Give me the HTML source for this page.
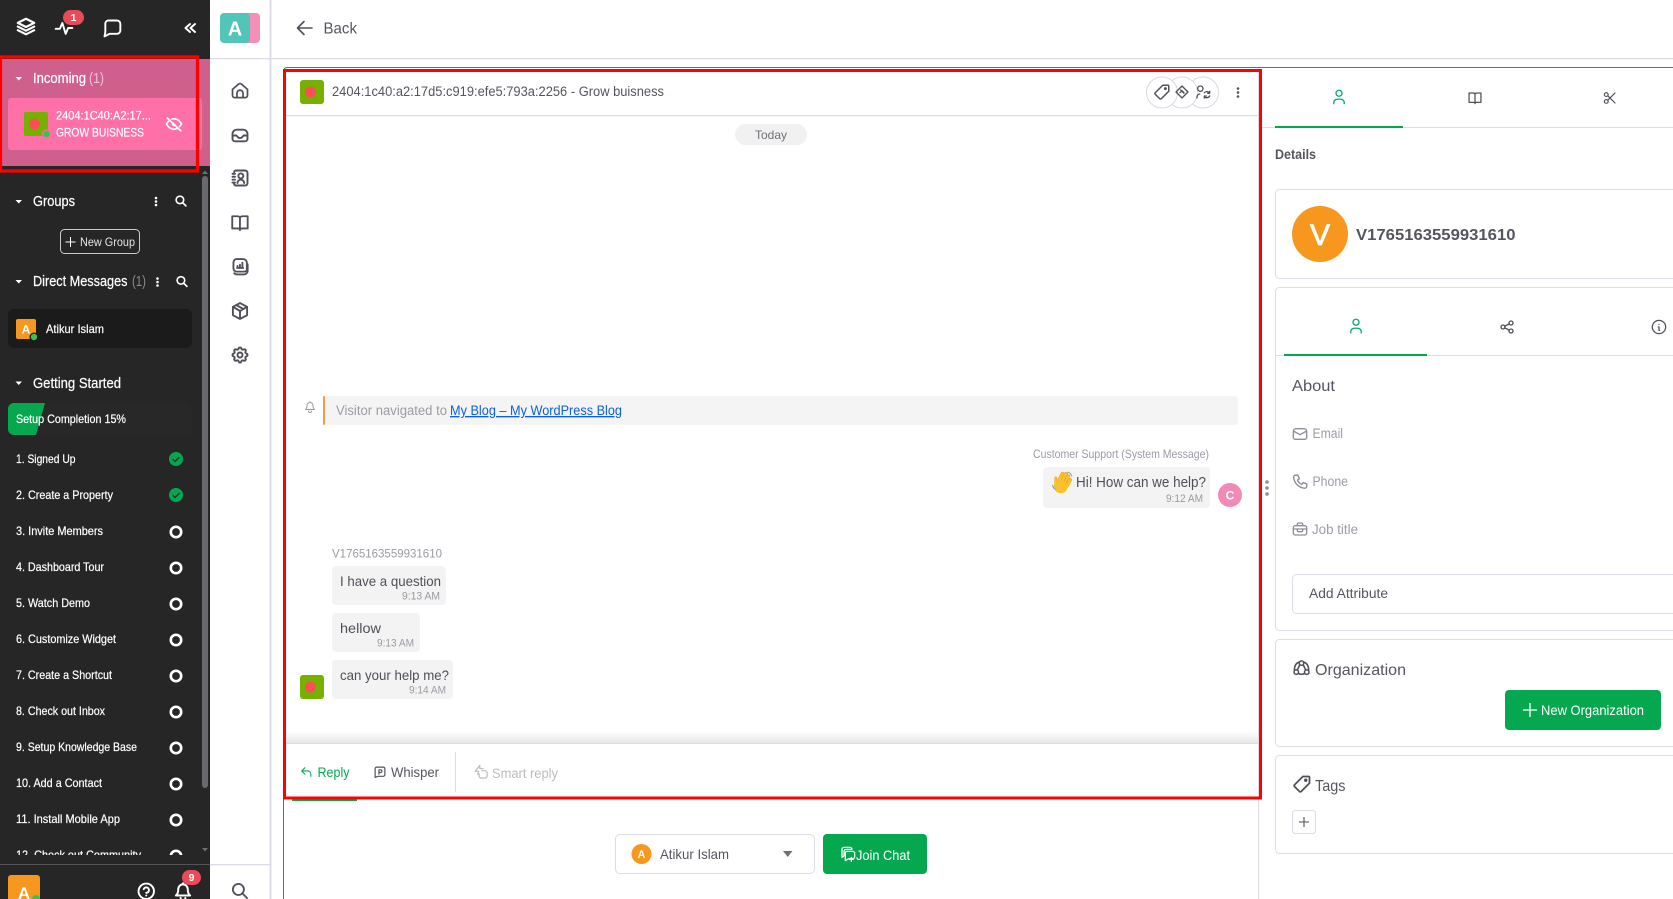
<!DOCTYPE html>
<html><head><meta charset="utf-8"><title>Chat</title>
<style>
html,body{margin:0;padding:0;background:#fff;width:1673px;height:899px;overflow:hidden}
svg{display:block;font-family:"Liberation Sans",sans-serif}
.i{fill:none;stroke-linecap:round;stroke-linejoin:round}
.w{fill:#fff}
</style></head><body>
<svg width="1673" height="899" viewBox="0 0 1673 899" xmlns="http://www.w3.org/2000/svg">
<defs>
<clipPath id="side"><rect x="0" y="0" width="210" height="855"/></clipPath>
<linearGradient id="sh" x1="0" y1="0" x2="0" y2="1"><stop offset="0" stop-color="#fff"/><stop offset="1" stop-color="#e6e6e8"/></linearGradient>
<symbol id="home" viewBox="0 0 24 24"><path d="M2 10.500L10 3.500a3 3 0 0 1 4 0l8 7v8a3 3 0 0 1-3 3H5a3 3 0 0 1-3-3z M8 21.500v-6a4 4 0 0 1 8 0v6"/></symbol>
<symbol id="inbox" viewBox="0 0 24 24"><path d="M8 5h8a5 5 0 0 1 5 5v6a3 3 0 0 1-3 3H6a3 3 0 0 1-3-3v-6a5 5 0 0 1 5-5z M3 12h4.500c1 0 1.500 3 4.500 3s3.500-3 4.500-3H21"/></symbol>
<symbol id="contact" viewBox="0 0 24 24"><path d="M5 5a2 2 0 0 1 2-2h11a3 3 0 0 1 3 3v12a3 3 0 0 1-3 3H7a2 2 0 0 1-2-2 M3 7h3 M3 10.500h3 M3 14h3 M3 17.500h3 M9 18a4 4 0 0 1 8 0"/><circle cx="13" cy="9.500" r="3"/></symbol>
<symbol id="book" viewBox="0 0 24 24"><path d="M2.500 4h6c2 0 3.500 1 3.500 2.500C12 5 13.500 4 15.500 4h6v15h-7c-1.500 0-2.500.5-2.500 2 0-1.500-1-2-2.500-2h-7z M12 6.500V21"/></symbol>
<symbol id="report" viewBox="0 0 24 24"><path d="M8 2.500h8a4.500 4.500 0 0 1 4.500 4.500v8a3 3 0 0 1-3 3h-9.500a4 4 0 0 1-4-4V6.500a4 4 0 0 1 4-4z M21.500 9v8a4.500 4.500 0 0 1-4.500 4.500H8a4 4 0 0 1-3-1.500 M8.500 13.500h7.500 M9 13v-2 M12 13V9.500 M15 13V7"/></symbol>
<symbol id="box" viewBox="0 0 24 24"><path d="M12 2.500l8.500 4.500v10L12 21.500 3.500 17V7z M12 12l8.500-5 M12 12v9.500 M12 12L3.500 7 M7.500 4.800l8.500 4.900"/></symbol>
<symbol id="gear" viewBox="0 0 24 24"><path d="M10.325 4.317c.426-1.756 2.924-1.756 3.35 0a1.724 1.724 0 0 0 2.573 1.066c1.543-.94 3.31.826 2.37 2.37a1.724 1.724 0 0 0 1.065 2.572c1.756.426 1.756 2.924 0 3.35a1.724 1.724 0 0 0-1.066 2.573c.94 1.543-.826 3.31-2.37 2.37a1.724 1.724 0 0 0-2.572 1.065c-.426 1.756-2.924 1.756-3.35 0a1.724 1.724 0 0 0-2.573-1.066c-1.543.94-3.31-.826-2.37-2.37a1.724 1.724 0 0 0-1.065-2.572c-1.756-.426-1.756-2.924 0-3.35a1.724 1.724 0 0 0 1.066-2.573c-.94-1.543.826-3.31 2.37-2.37 1 .608 2.296.07 2.572-1.065z"/><circle cx="12" cy="12" r="3"/></symbol>
<symbol id="search" viewBox="0 0 24 24"><circle cx="10" cy="10" r="7"/><path d="M21 21l-6-6"/></symbol>
<symbol id="layers" viewBox="0 0 24 24"><path d="M12 3L3 7.500l9 4.500 9-4.500z M3 11.500L12 16l9-4.500 M3 15.500L12 20l9-4.500"/></symbol>
<symbol id="pulse" viewBox="0 0 24 24"><path d="M2 13h5l3-7 4 13 3-7h5"/></symbol>
<symbol id="chat" viewBox="0 0 24 24"><path d="M7 3h11a4 4 0 0 1 4 4v8a4 4 0 0 1-4 4H9l-6 3 1-5V7a4 4 0 0 1 3-4z"/></symbol>
<symbol id="eyeoff" viewBox="0 0 24 24"><path d="M3 4l18 17 M10.600 10.600a2 2 0 0 0 2.800 2.800 M9.400 5.400A9 9 0 0 1 12 5c4 0 7.300 2.300 10 7-.8 1.400-1.700 2.600-2.600 3.600 M17 17.500c-1.500 1-3.200 1.500-5 1.500-4 0-7.300-2.300-10-7 1.300-2.200 2.700-3.900 4.300-5.100"/></symbol>
<symbol id="user" viewBox="0 0 24 24"><circle cx="12" cy="7" r="4"/><path d="M5 21v-1.500a4.500 4.500 0 0 1 4.500-4.500h5a4.500 4.500 0 0 1 4.500 4.500V21"/></symbol>
<symbol id="scissors" viewBox="0 0 24 24"><circle cx="6" cy="6.500" r="3"/><circle cx="6" cy="17.500" r="3"/><path d="M8.500 8.500L20 20 M8.500 15.500L20 4"/></symbol>
<symbol id="share" viewBox="0 0 24 24"><circle cx="6" cy="12" r="3"/><circle cx="18" cy="6" r="3"/><circle cx="18" cy="18" r="3"/><path d="M8.700 10.700l6.600-3.400 M8.700 13.300l6.600 3.400"/></symbol>
<symbol id="info" viewBox="0 0 24 24"><circle cx="12" cy="12" r="10"/><path d="M12 8h.01 M11 12h1v5h1"/></symbol>
<symbol id="mail" viewBox="0 0 24 24"><path d="M6 4h12a4 4 0 0 1 4 4v9a3 3 0 0 1-3 3H5a3 3 0 0 1-3-3V8a4 4 0 0 1 4-4z M3 8l9 5 9-5"/></symbol>
<symbol id="phone" viewBox="0 0 24 24"><path d="M6 3h3l2 5-2.500 2a11 11 0 0 0 6 6l2-2.500 5 2v3a3 3 0 0 1-3 3A17 17 0 0 1 3 6a3 3 0 0 1 3-3z"/></symbol>
<symbol id="brief" viewBox="0 0 24 24"><path d="M5 7h14a3 3 0 0 1 3 3v8a3 3 0 0 1-3 3H5a3 3 0 0 1-3-3v-8a3 3 0 0 1 3-3z M8 7V5a2 2 0 0 1 2-2h4a2 2 0 0 1 2 2v2 M2 12h20 M8 12v2a2 2 0 0 0 2 2h4a2 2 0 0 0 2-2v-2"/></symbol>
<symbol id="org" viewBox="0 0 24 24"><circle cx="12" cy="5.500" r="3"/><circle cx="5" cy="17.500" r="3"/><circle cx="19" cy="17.500" r="3"/><path d="M9.500 4C5 5 2.500 9 2.500 15 M14.500 4C19 5 21.500 9 21.500 15 M8 19.500c2.500 1 5.500 1 8 0 M9.500 8l-3 6.500 M14.500 8l3 6.500"/></symbol>
<symbol id="tag" viewBox="0 0 24 24"><path d="M13 3h7a1 1 0 0 1 1 1v7L11 21a1.500 1.500 0 0 1-2 0l-6-6a1.500 1.500 0 0 1 0-2z"/><circle cx="16.500" cy="7.500" r="1"/></symbol>
<symbol id="tick" viewBox="0 0 24 24"><path d="M12 3l9 9-9 9-9-9z M9 13l3-3 3 3 M10 9l5 5"/></symbol>
<symbol id="tr" viewBox="0 0 24 24"><circle cx="8" cy="7" r="4"/><path d="M3 21v-1.500a5 5 0 0 1 4-4.500 M14 13a5 5 0 0 1 8 1 M22 18a5 5 0 0 1-8 1 M22 11v3h-3 M14 21v-3h3"/></symbol>
<symbol id="reply" viewBox="0 0 24 24"><path d="M9 5L3 11l6 6 M3 11h11a6 6 0 0 1 6 6v4"/></symbol>
<symbol id="whisper" viewBox="0 0 24 24"><path d="M6 3h12a3 3 0 0 1 3 3v11a3 3 0 0 1-3 3H8l-5 2V6a3 3 0 0 1 3-3z M10 16V8h3a2.500 2.500 0 0 1 0 5h-3"/></symbol>
<symbol id="smart" viewBox="0 0 24 24"><path d="M11 2L4 11h5l-1 5 M11 2v5h5 M14 10h5a3 3 0 0 1 3 3v5a3 3 0 0 1-3 3h-6a3 3 0 0 1-3-3v-3"/></symbol>
<symbol id="join" viewBox="0 0 24 24"><path d="M6 2h9a3 3 0 0 1 3 3H9a3 3 0 0 0-3 3v7l-3 2V5a3 3 0 0 1 3-3z M10 8h9a3 3 0 0 1 3 3v5a3 3 0 0 1-3 3h-6l-5 3v-11a3 3 0 0 1 2-3z M17 17v6 M14 20h6"/></symbol>
<symbol id="help" viewBox="0 0 24 24"><circle cx="12" cy="12" r="10"/><path d="M12 17.500h.01 M12 14a3.500 3.500 0 1 0-3.300-4.700"/></symbol>
<symbol id="bell" viewBox="0 0 24 24"><path d="M12 3a6 6 0 0 1 6 6c0 5 1.500 7 3 8H3c1.500-1 3-3 3-8a6 6 0 0 1 6-6z M9 20a3 3 0 0 0 6 0 M12 1.500V3"/></symbol>
</defs>

<rect width="1673" height="899" fill="#fff"/>

<!-- left sidebar -->
<rect x="0" y="0" width="210" height="899" fill="#262626"/>
<rect x="0" y="59" width="210" height="107" fill="#cf608b"/>
<rect x="202" y="176" width="6" height="612" rx="3" fill="#69696e"/>
<path d="M202 174l3-3.500 3 3.500z M202 848l3 3.500 3-3.500z" fill="#6f6f73"/>

<g class="i" stroke="#fff" stroke-width="2.300">
<use href="#layers" x="15" y="16" width="22" height="22"/>
<use href="#pulse" x="54" y="18" width="20" height="20"/>
<use href="#chat" x="102" y="18" width="20" height="20"/>
</g>
<path d="M190 24l-4.500 4 4.500 4 M195 24l-4.500 4 4.500 4" class="i" stroke="#fff" stroke-width="2"/>
<rect x="63" y="10" width="21" height="15" rx="7.500" fill="#ea4b58"/>
<text x="73.500" y="21" font-size="10.500" font-weight="700" fill="#fff" text-anchor="middle">1</text>

<path d="M15.500 77h6.500l-3.250 3.500z M15.500 200h6.500l-3.250 3.500z M15.500 280h6.500l-3.250 3.500z M15.500 381.500h6.500l-3.250 3.500z" fill="#fff"/>

<text x="33" y="83" font-size="14.500" fill="#fff" stroke="#fff" stroke-width=".2" textLength="53" lengthAdjust="spacingAndGlyphs">Incoming</text>
<text x="89" y="83" font-size="14.500" fill="#f2c2d6" textLength="15" lengthAdjust="spacingAndGlyphs">(1)</text>
<rect x="8" y="98" width="194" height="52" rx="3" fill="#ff6fa8"/>
<rect x="24" y="112" width="24" height="24" rx="2" fill="#76b000"/>
<circle cx="34.500" cy="124" r="5.500" fill="#fc4e56"/>
<circle cx="46.500" cy="134" r="4.500" fill="#ff6fa8"/><circle cx="46.500" cy="134" r="3.300" fill="#3cc14f"/>
<g stroke="#fff" stroke-width=".2">
<text x="56" y="119.500" font-size="12" fill="#fff" textLength="95" lengthAdjust="spacingAndGlyphs">2404:1C40:A2:17...</text>
<text x="56" y="136.500" font-size="12" fill="#fff" textLength="88" lengthAdjust="spacingAndGlyphs">GROW BUISNESS</text>
</g>
<use href="#eyeoff" x="165" y="115" width="18" height="18" class="i" stroke="#fff" stroke-width="2.200"/>

<rect x="8" y="309" width="184" height="39" rx="6" fill="#1b1b1b"/>
<rect x="16" y="319" width="20" height="20" rx="2" fill="#f7971e"/>
<text x="26" y="333.500" font-size="12" font-weight="700" fill="#fff" text-anchor="middle">A</text>
<circle cx="34" cy="337" r="4.500" fill="#1b1b1b"/><circle cx="34" cy="337" r="3.200" fill="#3cc14f"/>

<g stroke="#fff" stroke-width=".2" fill="#fff">
<text x="33" y="206" font-size="14.500" textLength="42" lengthAdjust="spacingAndGlyphs">Groups</text>
<text x="33" y="286" font-size="14.500" textLength="94.500" lengthAdjust="spacingAndGlyphs">Direct Messages</text>
<text x="46" y="333" font-size="12" textLength="58" lengthAdjust="spacingAndGlyphs">Atikur Islam</text>
<text x="33" y="388" font-size="14.500" textLength="88" lengthAdjust="spacingAndGlyphs">Getting Started</text>
</g>
<g fill="#fff"><circle cx="156" cy="198" r="1.300"/><circle cx="156" cy="201.500" r="1.300"/><circle cx="156" cy="205" r="1.300"/>
<circle cx="157.500" cy="278.500" r="1.300"/><circle cx="157.500" cy="282" r="1.300"/><circle cx="157.500" cy="285.500" r="1.300"/></g>
<use href="#search" x="174.500" y="194.500" width="13" height="13" class="i" stroke="#fff" stroke-width="3"/>
<use href="#search" x="175.500" y="275" width="13" height="13" class="i" stroke="#fff" stroke-width="3"/>
<rect x="60.500" y="229.500" width="79" height="24" rx="4" fill="none" stroke="#c9c9c9"/>
<path d="M70.500 237v10 M65.500 242h10" stroke="#fff" fill="none"/>
<text x="80" y="246" font-size="12" fill="#e4e4e4" textLength="55" lengthAdjust="spacingAndGlyphs">New Group</text>
<text x="132" y="286" font-size="14.500" fill="#8a8a8a" textLength="14" lengthAdjust="spacingAndGlyphs">(1)</text>

<rect x="8" y="403" width="184" height="32" rx="6" fill="#282828"/>
<path d="M14 403h31l-9 32H14a6 6 0 0 1-6-6v-20a6 6 0 0 1 6-6z" fill="#05a84f"/>
<text x="16" y="423" font-size="12" fill="#fff" stroke="#fff" stroke-width=".2" textLength="110" lengthAdjust="spacingAndGlyphs">Setup Completion 15%</text>

<g clip-path="url(#side)">
<g font-size="12" fill="#fff" stroke="#fff" stroke-width=".2">
<text x="16" y="463" textLength="59.500" lengthAdjust="spacingAndGlyphs">1. Signed Up</text>
<text x="16" y="499" textLength="97" lengthAdjust="spacingAndGlyphs">2. Create a Property</text>
<text x="16" y="535" textLength="87" lengthAdjust="spacingAndGlyphs">3. Invite Members</text>
<text x="16" y="571" textLength="88" lengthAdjust="spacingAndGlyphs">4. Dashboard Tour</text>
<text x="16" y="607" textLength="74" lengthAdjust="spacingAndGlyphs">5. Watch Demo</text>
<text x="16" y="643" textLength="100" lengthAdjust="spacingAndGlyphs">6. Customize Widget</text>
<text x="16" y="679" textLength="96" lengthAdjust="spacingAndGlyphs">7. Create a Shortcut</text>
<text x="16" y="715" textLength="89" lengthAdjust="spacingAndGlyphs">8. Check out Inbox</text>
<text x="16" y="751" textLength="121" lengthAdjust="spacingAndGlyphs">9. Setup Knowledge Base</text>
<text x="16" y="787" textLength="86" lengthAdjust="spacingAndGlyphs">10. Add a Contact</text>
<text x="16" y="823" textLength="104" lengthAdjust="spacingAndGlyphs">11. Install Mobile App</text>
<text x="16" y="859" textLength="125" lengthAdjust="spacingAndGlyphs">12. Check out Community</text>
</g>
<circle cx="176" cy="459" r="7" fill="#05a84f"/><path d="M172.500 459l2.500 2.500 4.500-4.500" fill="none" stroke="#23382a" stroke-width="1.500"/>
<circle cx="176" cy="495" r="7" fill="#05a84f"/><path d="M172.500 495l2.500 2.500 4.500-4.500" fill="none" stroke="#23382a" stroke-width="1.500"/>
<g fill="none" stroke="#fff" stroke-width="2.600">
<circle cx="176" cy="532" r="5.200"/><circle cx="176" cy="568" r="5.200"/><circle cx="176" cy="604" r="5.200"/><circle cx="176" cy="640" r="5.200"/><circle cx="176" cy="676" r="5.200"/><circle cx="176" cy="712" r="5.200"/><circle cx="176" cy="748" r="5.200"/><circle cx="176" cy="784" r="5.200"/><circle cx="176" cy="820" r="5.200"/><circle cx="176" cy="856" r="5.200"/>
</g>
</g>

<rect x="0" y="864" width="210" height="1" fill="#555"/>
<rect x="8" y="875" width="32" height="34" rx="3" fill="#f7971e"/>
<text x="24" y="899" font-size="17" font-weight="700" fill="#fff" text-anchor="middle">A</text>
<circle cx="36" cy="899" r="4" fill="#3cc14f"/>
<use href="#help" x="137" y="882" width="18.500" height="18.500" class="i" stroke="#fff" stroke-width="2.500"/>
<use href="#bell" x="173.500" y="882" width="19" height="19" class="i" stroke="#fff" stroke-width="2.500"/>
<rect x="182" y="870" width="19" height="15" rx="7.500" fill="#ea4b58"/>
<text x="191.500" y="881" font-size="10.500" font-weight="700" fill="#fff" text-anchor="middle">9</text>

<!-- nav column -->
<rect x="269.500" y="0" width="2" height="899" fill="#dcdce9"/>
<rect x="210" y="58" width="1463" height="1.300" fill="#dcdce9"/>
<rect x="210" y="864" width="60" height="1.300" fill="#dcdce9"/>
<rect x="230" y="13" width="30" height="30" rx="4" fill="#f48fb8"/>
<rect x="220" y="13" width="30" height="30" rx="4" fill="#52c4b9"/>
<text x="235" y="35.500" font-size="20" font-weight="700" fill="#fff" text-anchor="middle">A</text>
<g class="i" stroke="#50505a" stroke-width="2.300">
<use href="#home" x="231" y="81.500" width="18" height="18"/>
<use href="#inbox" x="230" y="125.500" width="20" height="20"/>
<use href="#contact" x="230" y="168" width="20" height="20"/>
<use href="#book" x="230.200" y="213" width="19.500" height="19.500"/>
<use href="#report" x="230.200" y="257" width="19.500" height="19.500"/>
<use href="#box" x="230" y="301" width="20" height="20"/>
<use href="#gear" x="230" y="345" width="20" height="20"/>
<use href="#search" x="230.500" y="881.500" width="19" height="19"/>
</g>

<!-- back -->
<path d="M312 28H298 M304 21.500L297.500 28l6.500 6.500" fill="none" stroke="#50505a" stroke-width="1.600" stroke-linecap="round" stroke-linejoin="round"/>
<text x="323.500" y="33.500" font-size="16" fill="#55555f" textLength="33.500" lengthAdjust="spacingAndGlyphs">Back</text>

<!-- chat frame -->
<path d="M283.500 899V71a3.500 3.500 0 0 1 3.500-3.500H1673" fill="none" stroke="#05a84f" stroke-width="1"/>
<rect x="1258" y="70" width="1" height="829" fill="#dcdce9"/>
<rect x="286" y="115" width="972" height="1.200" fill="#dcdce9"/>
<rect x="300" y="80" width="24" height="24" rx="3" fill="#76b000"/>
<circle cx="310.500" cy="92" r="5.500" fill="#fc4e56"/>
<text x="332" y="96" font-size="13.500" fill="#55555f" textLength="332" lengthAdjust="spacingAndGlyphs">2404:1c40:a2:17d5:c919:efe5:793a:2256 - Grow buisness</text>

<g fill="#fff" stroke="#d8d8e4" stroke-width="1">
<circle cx="1203" cy="92.500" r="15.500"/><circle cx="1182" cy="92.500" r="15.500"/><circle cx="1162" cy="92.500" r="15.500"/>
</g>
<g class="i" stroke="#50505a" stroke-width="2">
<use href="#tr" x="1195" y="84" width="16" height="16"/>
<use href="#tick" x="1174" y="84" width="16" height="16"/>
<use href="#tag" x="1153" y="83" width="18" height="18"/>
</g>
<g fill="#50505a"><circle cx="1238" cy="88.500" r="1.300"/><circle cx="1238" cy="92.500" r="1.300"/><circle cx="1238" cy="96.500" r="1.300"/></g>

<rect x="735" y="124" width="72" height="21" rx="10.500" fill="#f1f1f1"/>
<text x="755" y="139" font-size="12" fill="#6f6f78" textLength="32" lengthAdjust="spacingAndGlyphs">Today</text>

<use href="#bell" x="304" y="401" width="12" height="12" class="i" stroke="#9a9aa2" stroke-width="2"/>
<rect x="323" y="396" width="915" height="29" rx="3" fill="#f4f4f4"/>
<rect x="323" y="396" width="2" height="29" rx="1" fill="#f79a4c"/>
<text x="336" y="415" font-size="13.500" fill="#9c9ca4" textLength="111" lengthAdjust="spacingAndGlyphs">Visitor navigated to</text>
<text x="450" y="415" font-size="13.500" fill="#0a5fe6" text-decoration="underline" textLength="172" lengthAdjust="spacingAndGlyphs">My Blog – My WordPress Blog</text>

<text x="1033" y="458" font-size="12" fill="#9a9aa8" textLength="176" lengthAdjust="spacingAndGlyphs">Customer Support (System Message)</text>
<rect x="1043" y="467" width="167" height="41" rx="4" fill="#f3f3f3"/>
<!-- waving hand -->
<g transform="rotate(28 1062 484)" fill="#fbc02d" stroke="#e8a21d" stroke-width=".5">
<path d="M1052.500 482l3 5 2-1-3.200-5.500a1.300 1.300 0 0 0-1.800 1.500z"/>
<rect x="1056" y="473" width="3.200" height="12" rx="1.600"/>
<rect x="1059.200" y="471.500" width="3.200" height="13" rx="1.600"/>
<rect x="1062.400" y="472.500" width="3.200" height="12" rx="1.600"/>
<rect x="1065.600" y="475" width="3.200" height="10" rx="1.600"/>
<ellipse cx="1062" cy="487" rx="7" ry="6.500" stroke="none"/>
</g>
<path d="M1052.500 485q.5 3 3 4.500 M1067.500 472q3.500 1 4.500 4.500" fill="none" stroke="#6aa9dc" stroke-width="1"/>
<text x="1076" y="487" font-size="14.500" fill="#4f4f59" textLength="130" lengthAdjust="spacingAndGlyphs">Hi! How can we help?</text>
<text x="1166" y="502" font-size="11" fill="#9a9aa2" textLength="37" lengthAdjust="spacingAndGlyphs">9:12 AM</text>
<circle cx="1230" cy="495" r="12" fill="#f18ab6"/>
<text x="1230" y="499.500" font-size="12" font-weight="700" fill="#fff" text-anchor="middle">C</text>
<g fill="#8d8d9c"><circle cx="1267" cy="482" r="1.800"/><circle cx="1267" cy="488" r="1.800"/><circle cx="1267" cy="494" r="1.800"/></g>

<text x="332" y="557.500" font-size="12" fill="#9a9aa2" textLength="110" lengthAdjust="spacingAndGlyphs">V1765163559931610</text>
<rect x="332" y="566" width="114" height="39" rx="4" fill="#f3f3f3"/>
<text x="340" y="586" font-size="14" fill="#4f4f59" textLength="101" lengthAdjust="spacingAndGlyphs">I have a question</text>
<text x="402" y="599.500" font-size="11" fill="#9a9aa2" textLength="38" lengthAdjust="spacingAndGlyphs">9:13 AM</text>
<rect x="332" y="613" width="88" height="39" rx="4" fill="#f3f3f3"/>
<text x="340" y="633" font-size="14" fill="#4f4f59" textLength="41" lengthAdjust="spacingAndGlyphs">hellow</text>
<text x="377" y="646.500" font-size="11" fill="#9a9aa2" textLength="37" lengthAdjust="spacingAndGlyphs">9:13 AM</text>
<rect x="332" y="660" width="121" height="39" rx="4" fill="#f3f3f3"/>
<text x="340" y="680" font-size="14" fill="#4f4f59" textLength="109" lengthAdjust="spacingAndGlyphs">can your help me?</text>
<text x="409" y="693.500" font-size="11" fill="#9a9aa2" textLength="37" lengthAdjust="spacingAndGlyphs">9:14 AM</text>
<rect x="300" y="675" width="24" height="24" rx="3" fill="#76b000"/>
<circle cx="310.500" cy="687" r="5.500" fill="#fc4e56"/>

<rect x="286" y="731" width="972" height="12" fill="url(#sh)"/>
<rect x="286" y="743" width="972" height="1" fill="#dcdce9"/>
<use href="#reply" x="300" y="765" width="13" height="13" class="i" stroke="#05a84f" stroke-width="2"/>
<text x="317.500" y="777" font-size="13.500" fill="#05a84f" textLength="32" lengthAdjust="spacingAndGlyphs">Reply</text>
<use href="#whisper" x="373.500" y="765.500" width="13" height="13" class="i" stroke="#50505a" stroke-width="2.200"/>
<text x="391" y="777" font-size="13.500" fill="#55555f" textLength="48" lengthAdjust="spacingAndGlyphs">Whisper</text>
<rect x="455" y="752" width="1" height="40" fill="#dcdce4"/>
<use href="#smart" x="472.500" y="764" width="16" height="16" class="i" stroke="#bcbcc0" stroke-width="1.800"/>
<text x="492" y="778" font-size="13.500" fill="#bcbcc0" textLength="66" lengthAdjust="spacingAndGlyphs">Smart reply</text>
<rect x="292" y="799" width="65" height="2" fill="#05a84f"/>

<!-- join -->
<rect x="615.500" y="834.500" width="199" height="39" rx="4.500" fill="#fff" stroke="#dcdce9"/>
<circle cx="641.500" cy="854" r="10" fill="#f7971e"/>
<text x="641.500" y="858" font-size="11" font-weight="700" fill="#fff" text-anchor="middle">A</text>
<text x="660" y="859" font-size="14" fill="#55555f" textLength="69" lengthAdjust="spacingAndGlyphs">Atikur Islam</text>
<path d="M783 851h9.500l-4.750 6z" fill="#70707a"/>
<rect x="823" y="834" width="104" height="40" rx="4" fill="#05a84f"/>
<use href="#join" x="840" y="846" width="16" height="16" class="i" stroke="#fff" stroke-width="1.900"/>
<text x="856" y="860" font-size="14" fill="#fff" textLength="54" lengthAdjust="spacingAndGlyphs">Join Chat</text>

<!-- right panel -->
<rect x="1261" y="127" width="412" height="1" fill="#dcdce9"/>
<rect x="1275" y="126" width="128" height="2" fill="#05a84f"/>
<use href="#user" x="1330" y="88" width="18" height="18" class="i" stroke="#08ab6a" stroke-width="1.800"/>
<use href="#book" x="1467.500" y="90.500" width="15" height="15" class="i" stroke="#50505a" stroke-width="2"/>
<use href="#scissors" x="1602.500" y="90.500" width="15" height="15" class="i" stroke="#50505a" stroke-width="1.900"/>
<text x="1275" y="159" font-size="13.500" font-weight="700" fill="#55555f" textLength="41" lengthAdjust="spacingAndGlyphs">Details</text>

<rect x="1275.500" y="189.500" width="420" height="89" rx="4" fill="#fff" stroke="#dcdce9"/>
<circle cx="1320" cy="234" r="28" fill="#f7971e"/>
<text x="1320" y="245" font-size="30" fill="#fff" stroke="#fff" stroke-width=".8" text-anchor="middle">V</text>
<text x="1356" y="240" font-size="16" font-weight="700" fill="#55555f" textLength="159.500" lengthAdjust="spacingAndGlyphs">V1765163559931610</text>

<rect x="1275.500" y="287.500" width="420" height="343" rx="4" fill="#fff" stroke="#dcdce9"/>
<rect x="1276" y="355" width="397" height="1" fill="#dcdce9"/>
<rect x="1284" y="354" width="143" height="2" fill="#05a84f"/>
<use href="#user" x="1347" y="317" width="18" height="18" class="i" stroke="#08ab6a" stroke-width="1.800"/>
<use href="#share" x="1499" y="319" width="16" height="16" class="i" stroke="#50505a" stroke-width="2"/>
<use href="#info" x="1651" y="319" width="16" height="16" class="i" stroke="#50505a" stroke-width="1.900"/>
<text x="1292" y="391" font-size="16" fill="#55555f" textLength="43" lengthAdjust="spacingAndGlyphs">About</text>
<g class="i" stroke="#8d8d98" stroke-width="2">
<use href="#mail" x="1292" y="426" width="16" height="16"/>
<use href="#phone" x="1291.500" y="473" width="17" height="17"/>
<use href="#brief" x="1292" y="521" width="16" height="16"/>
</g>
<g font-size="13.500" fill="#9c9ca6">
<text x="1312.500" y="438" textLength="30.500" lengthAdjust="spacingAndGlyphs">Email</text>
<text x="1312.500" y="486" textLength="35.500" lengthAdjust="spacingAndGlyphs">Phone</text>
<text x="1312" y="534" textLength="46" lengthAdjust="spacingAndGlyphs">Job title</text>
</g>
<rect x="1292.500" y="574.500" width="400" height="39" rx="4" fill="#fff" stroke="#dcdce9"/>
<text x="1309" y="598" font-size="13.500" fill="#55555f" textLength="79" lengthAdjust="spacingAndGlyphs">Add Attribute</text>

<rect x="1275.500" y="639.500" width="420" height="107" rx="4" fill="#fff" stroke="#dcdce9"/>
<use href="#org" x="1292.500" y="659" width="18" height="18" class="i" stroke="#50505a" stroke-width="2"/>
<text x="1315" y="675" font-size="16" fill="#55555f" textLength="91" lengthAdjust="spacingAndGlyphs">Organization</text>
<rect x="1505" y="690" width="156" height="40" rx="4" fill="#05a84f"/>
<path d="M1530 703v14 M1523 710h14" stroke="#fff" stroke-width="1.300" fill="none"/>
<text x="1541" y="715" font-size="14" fill="#fff" textLength="103" lengthAdjust="spacingAndGlyphs">New Organization</text>

<rect x="1275.500" y="755.500" width="420" height="98" rx="4" fill="#fff" stroke="#dcdce9"/>
<use href="#tag" x="1292" y="774" width="20" height="20" class="i" stroke="#50505a" stroke-width="2.100"/>
<text x="1315" y="791" font-size="16" fill="#55555f" textLength="30.500" lengthAdjust="spacingAndGlyphs">Tags</text>
<rect x="1292.500" y="810.500" width="23" height="23" rx="3" fill="#fff" stroke="#dcdce9"/>
<path d="M1304 817v10 M1299 822h10" stroke="#50505a" stroke-width="1.100" fill="none"/>

<!-- red annotations -->
<rect x="0.500" y="57" width="197" height="114" fill="none" stroke="#ff0000" stroke-width="3.300"/>
<rect x="284.500" y="70.500" width="976" height="727.500" fill="none" stroke="#ff0000" stroke-width="3"/>
</svg>
</body></html>
